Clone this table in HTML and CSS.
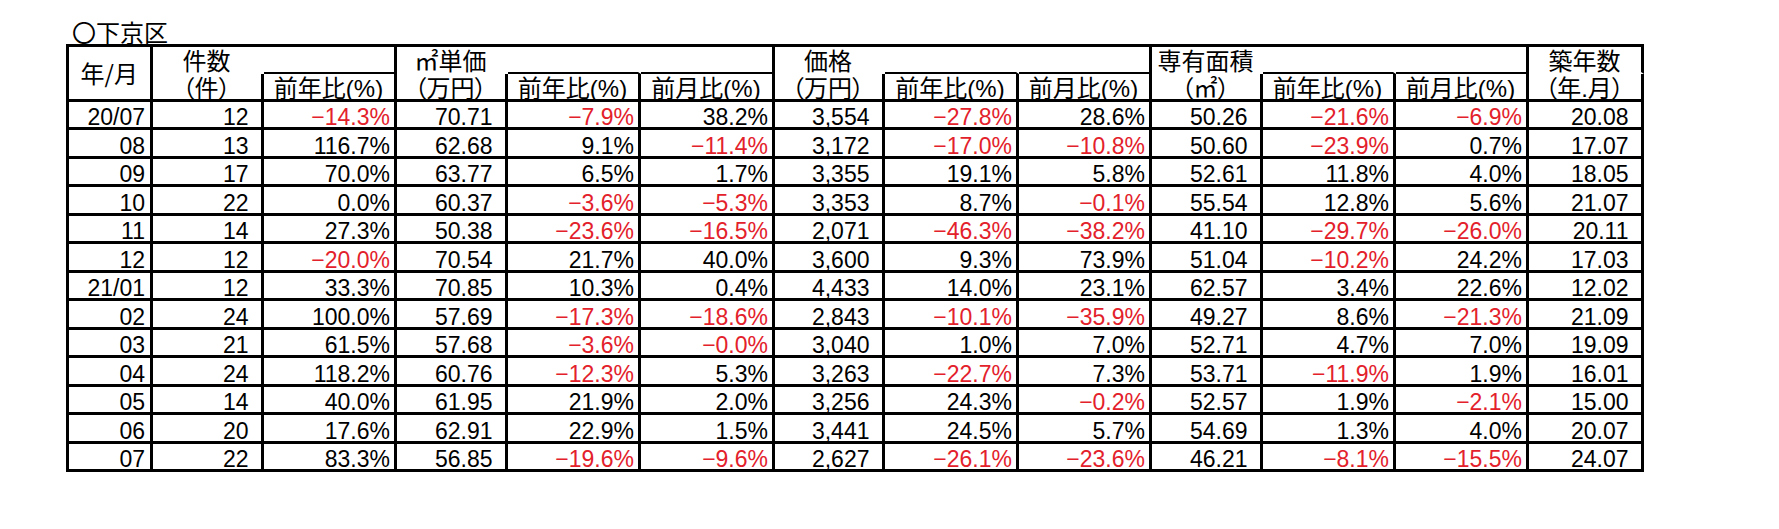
FILE: index.html
```html
<!DOCTYPE html>
<html lang="ja">
<head>
<meta charset="utf-8">
<title>下京区</title>
<link rel="stylesheet" href="styles.css">
</head>
<body>
<div class="title">〇下京区</div>
<table class="grid">
<colgroup>
<col class="c-ym"><col class="c-v"><col class="c-r"><col class="c-v"><col class="c-r"><col class="c-r2"><col class="c-v2"><col class="c-r2"><col class="c-r"><col class="c-v"><col class="c-r"><col class="c-r"><col class="c-last">
</colgroup>
<thead>
<tr class="h1">
<th class="ym" rowspan="2">年/月</th>
<th class="lbl">件数</th>
<th class="blank end"></th>
<th class="lbl">㎡単価</th>
<th class="blank"></th>
<th class="blank end"></th>
<th class="lbl">価格</th>
<th class="blank"></th>
<th class="blank end"></th>
<th class="lbl">専有面積</th>
<th class="blank"></th>
<th class="blank end"></th>
<th class="lbl end">築年数</th>
</tr>
<tr class="h2">
<th>（件）</th>
<th>前年比<span class="n">(%)</span></th>
<th>（万円）</th>
<th>前年比<span class="n">(%)</span></th>
<th>前月比<span class="n">(%)</span></th>
<th>（万円）</th>
<th>前年比<span class="n">(%)</span></th>
<th>前月比<span class="n">(%)</span></th>
<th>（㎡）</th>
<th>前年比<span class="n">(%)</span></th>
<th>前月比<span class="n">(%)</span></th>
<th>（年<span class="n">.</span>月）</th>
</tr>
</thead>
<tbody>
<tr><td class="ym">20/07</td><td class="v">12</td><td class="r neg">−14.3%</td><td class="v">70.71</td><td class="r neg">−7.9%</td><td class="r">38.2%</td><td class="v">3,554</td><td class="r neg">−27.8%</td><td class="r">28.6%</td><td class="v">50.26</td><td class="r neg">−21.6%</td><td class="r neg">−6.9%</td><td class="v">20.08</td></tr>
<tr><td class="ym">08</td><td class="v">13</td><td class="r">116.7%</td><td class="v">62.68</td><td class="r">9.1%</td><td class="r neg">−11.4%</td><td class="v">3,172</td><td class="r neg">−17.0%</td><td class="r neg">−10.8%</td><td class="v">50.60</td><td class="r neg">−23.9%</td><td class="r">0.7%</td><td class="v">17.07</td></tr>
<tr><td class="ym">09</td><td class="v">17</td><td class="r">70.0%</td><td class="v">63.77</td><td class="r">6.5%</td><td class="r">1.7%</td><td class="v">3,355</td><td class="r">19.1%</td><td class="r">5.8%</td><td class="v">52.61</td><td class="r">11.8%</td><td class="r">4.0%</td><td class="v">18.05</td></tr>
<tr><td class="ym">10</td><td class="v">22</td><td class="r">0.0%</td><td class="v">60.37</td><td class="r neg">−3.6%</td><td class="r neg">−5.3%</td><td class="v">3,353</td><td class="r">8.7%</td><td class="r neg">−0.1%</td><td class="v">55.54</td><td class="r">12.8%</td><td class="r">5.6%</td><td class="v">21.07</td></tr>
<tr><td class="ym">11</td><td class="v">14</td><td class="r">27.3%</td><td class="v">50.38</td><td class="r neg">−23.6%</td><td class="r neg">−16.5%</td><td class="v">2,071</td><td class="r neg">−46.3%</td><td class="r neg">−38.2%</td><td class="v">41.10</td><td class="r neg">−29.7%</td><td class="r neg">−26.0%</td><td class="v">20.11</td></tr>
<tr><td class="ym">12</td><td class="v">12</td><td class="r neg">−20.0%</td><td class="v">70.54</td><td class="r">21.7%</td><td class="r">40.0%</td><td class="v">3,600</td><td class="r">9.3%</td><td class="r">73.9%</td><td class="v">51.04</td><td class="r neg">−10.2%</td><td class="r">24.2%</td><td class="v">17.03</td></tr>
<tr><td class="ym">21/01</td><td class="v">12</td><td class="r">33.3%</td><td class="v">70.85</td><td class="r">10.3%</td><td class="r">0.4%</td><td class="v">4,433</td><td class="r">14.0%</td><td class="r">23.1%</td><td class="v">62.57</td><td class="r">3.4%</td><td class="r">22.6%</td><td class="v">12.02</td></tr>
<tr><td class="ym">02</td><td class="v">24</td><td class="r">100.0%</td><td class="v">57.69</td><td class="r neg">−17.3%</td><td class="r neg">−18.6%</td><td class="v">2,843</td><td class="r neg">−10.1%</td><td class="r neg">−35.9%</td><td class="v">49.27</td><td class="r">8.6%</td><td class="r neg">−21.3%</td><td class="v">21.09</td></tr>
<tr><td class="ym">03</td><td class="v">21</td><td class="r">61.5%</td><td class="v">57.68</td><td class="r neg">−3.6%</td><td class="r neg">−0.0%</td><td class="v">3,040</td><td class="r">1.0%</td><td class="r">7.0%</td><td class="v">52.71</td><td class="r">4.7%</td><td class="r">7.0%</td><td class="v">19.09</td></tr>
<tr><td class="ym">04</td><td class="v">24</td><td class="r">118.2%</td><td class="v">60.76</td><td class="r neg">−12.3%</td><td class="r">5.3%</td><td class="v">3,263</td><td class="r neg">−22.7%</td><td class="r">7.3%</td><td class="v">53.71</td><td class="r neg">−11.9%</td><td class="r">1.9%</td><td class="v">16.01</td></tr>
<tr><td class="ym">05</td><td class="v">14</td><td class="r">40.0%</td><td class="v">61.95</td><td class="r">21.9%</td><td class="r">2.0%</td><td class="v">3,256</td><td class="r">24.3%</td><td class="r neg">−0.2%</td><td class="v">52.57</td><td class="r">1.9%</td><td class="r neg">−2.1%</td><td class="v">15.00</td></tr>
<tr><td class="ym">06</td><td class="v">20</td><td class="r">17.6%</td><td class="v">62.91</td><td class="r">22.9%</td><td class="r">1.5%</td><td class="v">3,441</td><td class="r">24.5%</td><td class="r">5.7%</td><td class="v">54.69</td><td class="r">1.3%</td><td class="r">4.0%</td><td class="v">20.07</td></tr>
<tr><td class="ym">07</td><td class="v">22</td><td class="r">83.3%</td><td class="v">56.85</td><td class="r neg">−19.6%</td><td class="r neg">−9.6%</td><td class="v">2,627</td><td class="r neg">−26.1%</td><td class="r neg">−23.6%</td><td class="v">46.21</td><td class="r neg">−8.1%</td><td class="r neg">−15.5%</td><td class="v">24.07</td></tr>
</tbody>
</table>
</body>
</html>
```

FILE: styles.css
```css
html, body {
  margin: 0;
  background: #ffffff;
}

body {
  padding: 20px 0 0 66px;
  color: #000000;
  font-family: "Liberation Sans Narrow", "Liberation Sans", "Noto Sans CJK JP", sans-serif;
}

.title {
  font-family: "Noto Sans CJK JP", sans-serif;
  font-size: 24px;
  line-height: 24px;
  height: 24px;
  padding-left: 6px;
}

.grid {
  border-collapse: separate;
  border-spacing: 0;
  table-layout: fixed;
  width: 1577.5px;
  border-top: 3px solid #000;
  border-left: 3px solid #000;
}

.c-ym { width: 83.5px; }
.c-v { width: 111px; }
.c-r { width: 133px; }
.c-r2 { width: 134px; }
.c-v2 { width: 110px; }
.c-last { width: 115px; }

.grid th,
.grid td {
  border-right: 3px solid #000;
  border-bottom: 3px solid #000;
  padding: 0;
  vertical-align: bottom;
  white-space: nowrap;
  box-sizing: border-box;
}

.grid th {
  font-family: "Noto Sans CJK JP", sans-serif;
  font-weight: normal;
  font-size: 24px;
  line-height: 24px;
  text-align: center;
  font-feature-settings: "palt";
}

.grid th .n {
  font-family: "Liberation Sans Narrow", "Liberation Sans", sans-serif;
  line-height: 0;
}

.h1 { height: 26.5px; }
.h2 { height: 28px; }
.grid tbody tr { height: 28.5px; }

.grid th.ym {
  vertical-align: middle;
}

.grid th.lbl {
  border-right-color: transparent;
  border-bottom: 2px solid transparent;
}

.grid th.lbl.end {
  border-right-color: #000;
}

.grid th.blank {
  border-right-color: transparent;
  border-bottom-width: 2px;
}

.grid th.blank.end {
  border-right-color: #000;
}

.grid td {
  font-size: 23px;
  line-height: 20px;
  text-align: right;
}

.grid td.ym { padding-right: 4.5px; }
.grid td.v { padding-right: 12px; }
.grid td.r { padding-right: 3.5px; }

.grid td.neg { color: #e3212b; }
```
